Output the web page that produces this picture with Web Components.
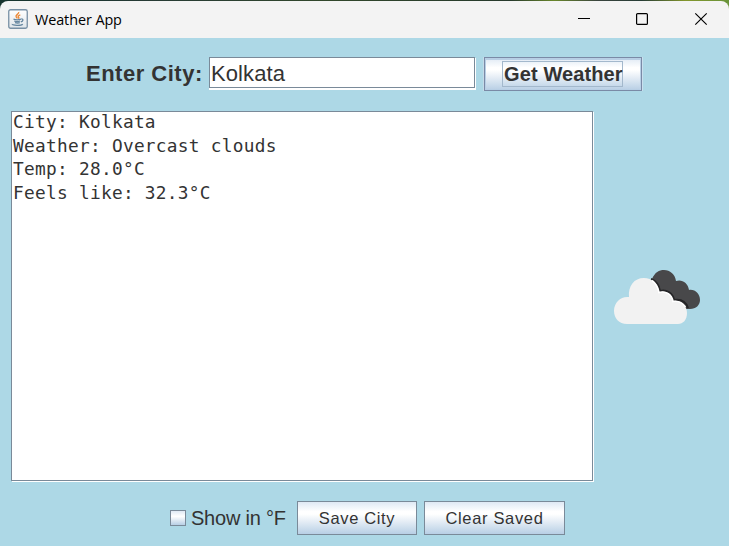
<!DOCTYPE html>
<html lang="en"><head><meta charset="utf-8"><title>Weather App</title>
<style>html,body{margin:0;width:729px;height:546px;overflow:hidden;background:#add8e6}</style></head>
<body><weather-window></weather-window>
<script>
const define=(name,html)=>customElements.define(name,class extends HTMLElement{
  constructor(){super();this.attachShadow({mode:'open'}).innerHTML=html;}
});

define('title-bar',`<style>
:host{display:block;height:38px;box-sizing:border-box;padding-top:1px;background:linear-gradient(90deg,#17342e 0 8%,#263a35 20%,#31472b 45%,#26392c 70%,#68862b 76%,#39443d 82%,#263c35 88%,#83962c 94%,#69943a)}
.bar{display:flex;align-items:center;height:37px;box-sizing:border-box;background:#f3f3f3;border-radius:8px 8px 0 0;padding:0 21px 0 8px}
.title{font:14.4px/20px "Open Sans","Noto Sans",sans-serif;color:#000;margin-left:7px;letter-spacing:-.08px;flex:1;white-space:nowrap}
.controls{display:flex;gap:45px;margin-top:-1px}svg{display:block}
.java{margin-top:-1px}
</style><div class="bar">
<svg class="java" width="20" height="20" viewBox="0 0 20 20"><defs><linearGradient id="g" x2="0" y2="1"><stop stop-color="#fff"/><stop offset="1" stop-color="#dfe5ea"/></linearGradient></defs><rect x=".75" y=".75" width="18.5" height="18.5" rx="1.8" fill="url(#g)" stroke="#7890a5" stroke-width="1.3"/>
<path d="M10.7 3c.6 2-3.6 2.9-2.6 4.8.3.7 1 1 1.4 1.6M12.3 5.8c-2 .7-2.7 1.4-1.7 2.4.5.6.2 1-.3 1.4" fill="none" stroke="#ec8a39" stroke-width="1.4"/>
<path d="M5.5 10.2c1.8.6 5.6.6 7.5 0M6.2 12c1.8.7 4.5.7 6 0M7 13.7c1.5.5 3.6.5 4.8 0M13.2 10c2.7-.4 2 2.2-.3 2.8M4.3 15c-.5 1.6 8.9 1.8 10.5.2" fill="none" stroke="#64859f" stroke-width="1.25"/></svg>
<span class="title"><slot></slot></span>
<div class="controls"><svg width="14" height="14" viewBox="0 0 14 14"><path d="M2 6.5h12" stroke="#000"/></svg>
<svg width="14" height="14" viewBox="0 0 14 14"><rect x="1.6" y="1.6" width="10.8" height="10.8" rx="1" fill="none" stroke="#000" stroke-width="1.2"/></svg>
<svg width="14" height="14" viewBox="0 0 14 14"><path d="M1.3 1.3l11.4 11.4M12.7 1.3L1.3 12.7" stroke="#000" stroke-width="1.15"/></svg></div></div>`);

define('text-field',`<style>
:host{display:block;width:266px;height:31px;box-sizing:border-box;border:1px solid #7a8a99;background:#fff;box-shadow:0 1px #fff,0 2px #fff,1px 1px #fff,1px 2px #fff;padding-left:1px;font:22px/32px "Liberation Sans",Arial,sans-serif;letter-spacing:.1px;color:#333}
</style><slot></slot>`);

define('metal-button',`<style>
:host{display:flex;align-items:center;justify-content:center;box-sizing:border-box;height:34px;border:1px solid #7a8a99;background:linear-gradient(#dfe9f4 0,#fff 30%,#fff 38%,#b8cfe5 100%);font:16.5px/32px "Liberation Sans",Arial,sans-serif;letter-spacing:.66px;color:#333;white-space:nowrap}
:host([primary]){border-color:#7a8aa6;font:bold 20px/24px "Liberation Sans",Arial,sans-serif;letter-spacing:.12px;box-shadow:inset 0 2px #b8cfe5,inset 0 0 0 1px #b8cfe5,1px 0 #c9dfee,-1px 0 #c5dbe9}
:host([primary]) span{border:1px solid #a3b8cc;box-sizing:border-box;width:121px;height:26px;padding-left:1px;line-height:24px;margin-right:1px}
</style><span><slot></slot></span>`);

define('metal-checkbox',`<style>
:host{display:flex;align-items:center;gap:5px;font:20px/34px "Liberation Sans",Arial,sans-serif;letter-spacing:-.22px;color:#333;white-space:nowrap}
i{display:block;box-sizing:border-box;width:16px;height:16px;border:1px solid #7a8a99;background:linear-gradient(#dfe9f4,#fff 38%,#b8cfe5)}
</style><i></i><slot></slot>`);

define('report-area',`<style>
:host{display:block;box-sizing:border-box;width:582px;height:370px;border:1px solid #7a8a99;background:#fff;box-shadow:1px 1px #fff;font:17.8px/23.7px "DejaVu Sans Mono",monospace;letter-spacing:.284px;color:#333;white-space:pre}
div{margin:-2px 0 0 1px}
</style><div><slot></slot></div>`);

define('cloud-icon',`<style>:host{display:block;width:88px;height:56px}svg{display:block}</style>
<svg width="88" height="56" viewBox="0 0 88 56"><path d="M39 10C42 3 46 1 51 1c6 0 11 4 12 11 6-2 12 2 13 9 6-1 11 4 11 10 0 5-4 9-10 9H65L39 20z" fill="#48484a"/>
<path d="M38 10c5 2 8 6 9 12 6-2 13 2 14 9 7-1 12 2 14 8" fill="none" stroke="#252527" stroke-width="2"/>
<path d="M14 55C6 55 1 49 1 42c0-9 7-15 15-14-1-11 5-19 15-19 8 0 14 6 15 14 7-2 13 2 14 9 7-1 14 4 14 12 0 7-4 11-9 11z" fill="#f2f2f2"/>
<path d="M39 11.5c4 3 6 6 7 12 7-2 13 2 14 9 6-1 10 2 12.5 5.5" fill="none" stroke="#fff" stroke-width="1.6"/></svg>`);

define('weather-window',`<style>
:host{display:grid;grid-template-rows:38px 73px 370px 65px;width:729px;height:546px;background:#add8e6}
.search{display:flex;align-items:flex-start;padding:19px 0 0 86px}
label{font:bold 22px/33px "Liberation Sans",Arial,sans-serif;letter-spacing:.5px;color:#333;width:123px;white-space:nowrap;box-sizing:border-box}
.get{width:158px;margin-left:9px}.main{display:flex;padding-left:11px}
cloud-icon{margin:158px 0 0 20px}.footer{display:flex;align-items:flex-start;padding:20px 0 0 170px}
metal-checkbox{width:127px}.save{width:120px;margin-right:7px}.clear{width:141px}
</style><title-bar>Weather App</title-bar>
<div class="search"><label>Enter City:</label><text-field>Kolkata</text-field><metal-button class="get" primary>Get Weather</metal-button></div>
<div class="main"><report-area>City: Kolkata
Weather: Overcast clouds
Temp: 28.0°C
Feels like: 32.3°C</report-area><cloud-icon></cloud-icon></div>
<div class="footer"><metal-checkbox>Show in °F</metal-checkbox><metal-button class="save">Save City</metal-button><metal-button class="clear">Clear Saved</metal-button></div>`);
</script></body></html>
